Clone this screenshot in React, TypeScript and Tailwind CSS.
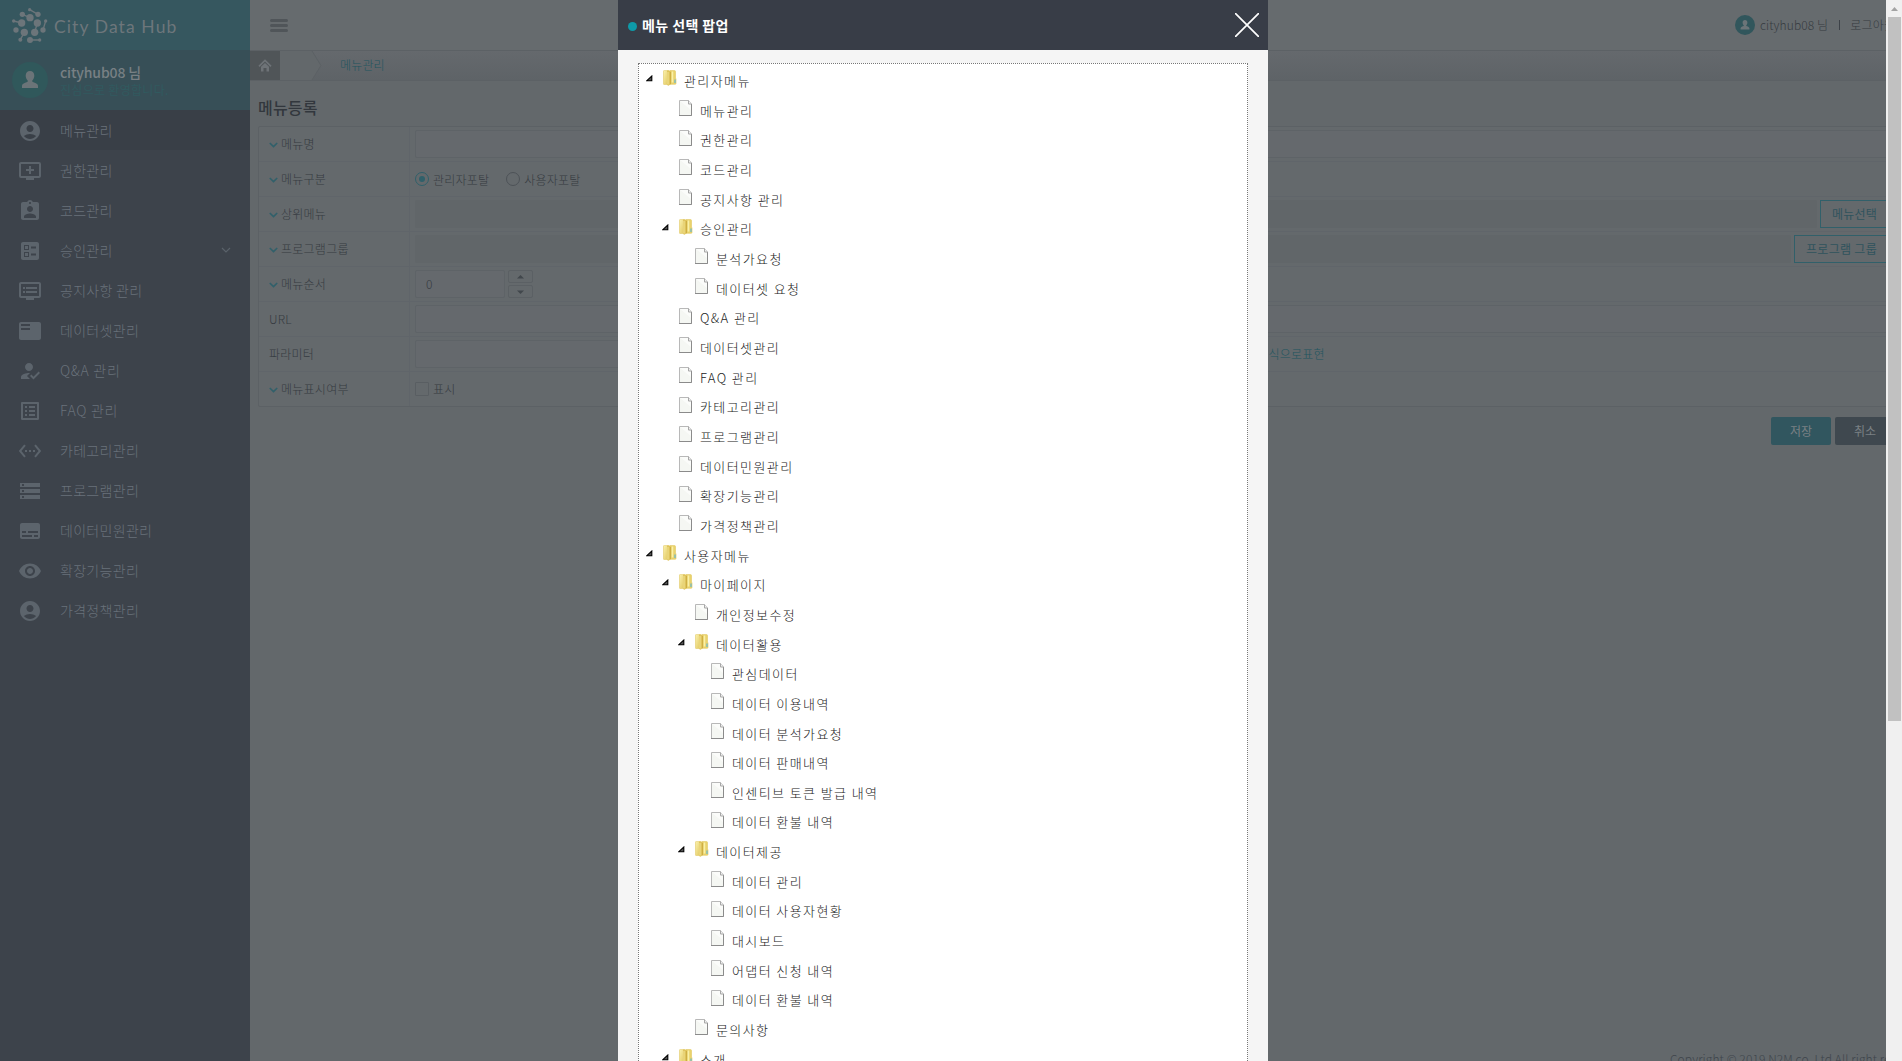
import React from "react";
import {
  MdAccountCircle, MdAddToQueue, MdAssignmentInd, MdBallot, MdDvr, MdFeaturedPlayList,
  MdHowToReg, MdListAlt, MdSettingsEthernet, MdStorage, MdSubtitles, MdVisibility,
} from "react-icons/md";

const menu = [
  { icon: MdAccountCircle, label: "메뉴관리", active: true },
  { icon: MdAddToQueue, label: "권한관리" },
  { icon: MdAssignmentInd, label: "코드관리" },
  { icon: MdBallot, label: "승인관리", sub: true },
  { icon: MdDvr, label: "공지사항 관리" },
  { icon: MdFeaturedPlayList, label: "데이터셋관리" },
  { icon: MdHowToReg, label: "Q&A 관리", wide: true },
  { icon: MdListAlt, label: "FAQ 관리", wide: true },
  { icon: MdSettingsEthernet, label: "카테고리관리" },
  { icon: MdStorage, label: "프로그램관리" },
  { icon: MdSubtitles, label: "데이터민원관리" },
  { icon: MdVisibility, label: "확장기능관리" },
  { icon: MdAccountCircle, label: "가격정책관리" },
];

const tree: [number, string, boolean?][] = [
  [0, "관리자메뉴", true],
  [1, "메뉴관리"], [1, "권한관리"], [1, "코드관리"], [1, "공지사항 관리"],
  [1, "승인관리", true], [2, "분석가요청"], [2, "데이터셋 요청"],
  [1, "Q&A 관리"], [1, "데이터셋관리"], [1, "FAQ 관리"], [1, "카테고리관리"],
  [1, "프로그램관리"], [1, "데이터민원관리"], [1, "확장기능관리"], [1, "가격정책관리"],
  [0, "사용자메뉴", true],
  [1, "마이페이지", true], [2, "개인정보수정"],
  [2, "데이터활용", true], [3, "관심데이터"], [3, "데이터 이용내역"], [3, "데이터 분석가요청"],
  [3, "데이터 판매내역"], [3, "인센티브 토큰 발급 내역"], [3, "데이터 환불 내역"],
  [2, "데이터제공", true], [3, "데이터 관리"], [3, "데이터 사용자현황"], [3, "대시보드"],
  [3, "어댑터 신청 내역"], [3, "데이터 환불 내역"],
  [2, "문의사항"],
  [1, "소개", true],
];

const indent = ["pl-[7px]", "pl-[23px]", "pl-[39px]", "pl-[55px]"];

function Logo() {
  const dots: [number, number, number][] = [
    [65, 14, 5], [43, 28, 8], [90, 28, 8], [66, 38, 11], [17, 48, 5],
    [41, 54, 11], [88, 54, 11], [113, 48, 5], [24, 75, 8], [49, 82, 11],
    [80, 82, 11], [105, 75, 8], [37, 104, 6], [66, 105, 9], [95, 105, 5],
  ];
  return (
    <svg width="44" height="40" viewBox="0 0 132 120" className="shrink-0" fill="#6c757a" stroke="#6c757a">
      <path fill="none" strokeWidth="4" d="M65 14L90 28M43 28L66 38M17 48L41 54M88 54L80 82M113 48L105 75M49 82L37 104M66 105H95" />
      {dots.map(([x, y, r], i) => <circle key={i} cx={x} cy={y} r={r} stroke="none" />)}
    </svg>
  );
}

function Person({ className, size }: { className: string; size: number }) {
  return (
    <svg width={size} height={size} viewBox="0 0 18 18" className={className} fill="currentColor">
      <path d="M9 0c2.700 0 4.300 1.900 4.300 4.600 0 2-.7 3.800-2 4.800v1.400c1.800.9 5.700 1.400 5.700 4.200V17H1v-2c0-2.800 3.900-3.300 5.700-4.200V9.400c-1.300-1-2-2.800-2-4.800C4.700 1.900 6.300 0 9 0z" />
    </svg>
  );
}

function FolderIcon() {
  return (
    <svg width="14" height="16" viewBox="0 0 14 16" className="shrink-0">
      <defs>
        <linearGradient id="fold" x1="0" y1="0" x2="1" y2="1">
          <stop offset="0" stopColor="#fbf2ae" />
          <stop offset="1" stopColor="#e0c65c" />
        </linearGradient>
      </defs>
      <path d="M7 .6h4.500q1 0 1 1v6.400l.5 1v4.500q0 .8-.8.800H7z" fill="#e9d26c" stroke="#e0c760" strokeWidth=".6" />
      <path d="M.5 1.200Q.5.400 1.200.4H5.500V14.500H1q-.5 0-.5-.6z" fill="url(#fold)" stroke="#e2ca68" strokeWidth=".6" />
      <path d="M4 .5h2.500l1.500 1.500V14l-2.500 1.800L4 15z" fill="#dfc45c" />
      <path d="M5 2v12.500" stroke="#f3e596" strokeWidth="1" />
      <path d="M7.500 2v12" stroke="#c9a83e" strokeWidth=".8" />
      <path d="M9.500 1.500v11" stroke="#faf0a8" strokeWidth="1.500" />
      <path d="M12 9.500v3.500" stroke="#58b4dc" strokeWidth="1.100" />
    </svg>
  );
}

function FileIcon() {
  return (
    <svg width="14" height="16" viewBox="0 0 14 16" className="shrink-0">
      <path d="M.5.500H9.500L12.500 4v11.500H.5z" fill="#f5f7f3" stroke="#b8b8b8" />
      <path d="M0 15.500h12.500V4" fill="none" stroke="#8b8b8b" />
      <path d="M1 1h8v3.500h3v5.500z" fill="#fff" opacity=".6" />
      <path d="M9.500.5v3.500h3" fill="#eee" stroke="#a8a8a8" />
    </svg>
  );
}

function Check() {
  return (
    <svg width="9" height="6" viewBox="0 0 9 6" className="mr-[3px] mt-[2px]" fill="none" stroke="#31606a" strokeWidth="1.700">
      <path d="M.8 1l3.700 3.500L8.200 1" />
    </svg>
  );
}

function Row({ label, req = true, last, children }: { label: string; req?: boolean; last?: boolean; children?: React.ReactNode }) {
  return (
    <div className={`flex ${last ? "h-[34px]" : "h-[35px] border-b border-[#60656a]"}`}>
      <div className="flex w-[151px] shrink-0 items-center border-r border-[#60656a] pl-[10px] text-[12px] tracking-[0.25px]">
        {req && <Check />}
        <span>{label}</span>
      </div>
      <div className="flex flex-1 items-center pl-[5px] pr-[5px] text-[12px] tracking-[0.2px]">{children}</div>
    </div>
  );
}

const Field = () => <div className="h-7 flex-1 rounded-[2px] border border-[#5e6367] bg-[#65696d]" />;
const Disabled = () => <div className="h-7 flex-1 rounded-[2px] bg-[#616669]" />;

function Spin({ d }: { d: string }) {
  return (
    <div className="flex h-[13px] w-[25px] items-center justify-center rounded-[2px] border border-[#5b6064]">
      <svg width="7" height="4" viewBox="0 0 7 4" fill="#41474c"><path d={d} /></svg>
    </div>
  );
}

function Sidebar() {
  return (
    <aside className="h-full w-[250px] shrink-0 bg-[#3d434b]">
      <div className="flex h-[50px] items-center bg-[#36575f] pl-2">
        <Logo />
        <span className="ml-[2px] mt-[5px] whitespace-nowrap font-['Lato'] text-[17.5px] font-normal tracking-[1.1px] text-[#6d767b]">City Data Hub</span>
      </div>
      <div className="flex h-[60px] items-center bg-[#374f57] pl-3">
        <div className="flex size-9 items-center justify-center rounded-full bg-[#30585b]">
          <Person size={18} className="mb-px text-[#6b7478]" />
        </div>
        <div className="ml-3 flex flex-col pt-[1px]">
          <span className="text-[14px] font-medium leading-[18px] tracking-[-0.15px] text-[#788084]">cityhub08 님</span>
          <span className="text-[12px] font-normal leading-[18px] tracking-[0.3px] text-[#315a5f]">진심으로 환영합니다.</span>
        </div>
      </div>
      {menu.map(({ icon: Icon, label, active, sub, wide }) => (
        <div key={label} className={`flex h-10 items-center pl-[18px] pr-[18px] text-[14px] text-[#5c646c] ${wide ? "tracking-[0.7px]" : "tracking-[0.3px]"} ${active ? "bg-[#393f47]" : ""}`}>
          <Icon size={24} className="mt-[2px]" />
          <span className="ml-[18px] flex-1 text-[#69717a]">{label}</span>
          {sub && (
            <svg width="12" height="8" viewBox="0 0 12 8" fill="none" stroke="#5a626a" strokeWidth="1.200"><path d="M2 2l4 4 4-4" /></svg>
          )}
        </div>
      ))}
    </aside>
  );
}

function Main() {
  return (
    <main className="flex h-full w-[1652px] shrink-0 flex-col bg-[#63686b] text-[#363b41]">
      <header className="flex h-[50px] shrink-0 items-center bg-[#666b6e] pl-5">
        <div className="flex w-[18px] flex-col gap-[2px]">
          <i className="h-[3px] rounded-sm bg-[#505559]" />
          <i className="h-[3px] rounded-sm bg-[#505559]" />
          <i className="h-[3px] rounded-sm bg-[#505559]" />
        </div>
        <div className="ml-[1447px] flex items-center whitespace-nowrap text-[12px]">
          <span className="flex size-5 items-center justify-center rounded-full bg-[#31565c]"><Person size={10} className="text-[#6b7478]" /></span>
          <span className="ml-[5px] tracking-[0.1px]">cityhub08 님</span>
          <i className="ml-[11px] h-[10px] w-px bg-[#3d4248]" />
          <span className="ml-[10px] tracking-[0.25px]">로그아웃</span>
        </div>
      </header>
      <nav className="flex h-[31px] shrink-0 border-y border-[#5c6165] bg-linear-to-b from-[#65696d] to-[#5e6367]">
        <span className="flex w-[30px] items-center justify-center bg-[#505558]">
          <svg width="14" height="13" viewBox="0 0 14 13" fill="none" stroke="#6e7377">
            <path d="M1 7.300L7 1.500l6 5.800" strokeWidth="1.700" />
            <path d="M3 7.800L7 4l4 3.800V12.500H8.500V9h-3v3.500H3z" fill="#6e7377" stroke="none" />
          </svg>
        </span>
        <svg width="42" height="29" viewBox="0 0 42 29" fill="none"><path d="M0 0H32l9 14.500L32 29H0z" fill="#63686b" /><path d="M32 0l9 14.500L32 29" stroke="#5c6165" /></svg>
        <span className="-mt-[2px] ml-[18px] self-center text-[12px] tracking-[0.15px] text-[#22555f]">메뉴관리</span>
      </nav>
      <h1 className="ml-2 mt-[15px] text-[16px] font-medium leading-[22px] tracking-[0.2px] text-[#32373d]">메뉴등록</h1>
      <section className="ml-2 mt-2 w-[1637px] rounded-[2px] border border-[#5c6165] bg-[#64696c]">
        <Row label="메뉴명"><Field /></Row>
        <Row label="메뉴구분">
          <span className="flex size-[14px] items-center justify-center rounded-full border border-[#30606a]"><i className="size-[6px] rounded-full bg-[#30606a]" /></span>
          <span className="ml-1 mt-px">관리자포탈</span>
          <span className="ml-[17px] size-[14px] rounded-full border border-[#4d5257]" />
          <span className="ml-1 mt-px">사용자포탈</span>
        </Row>
        <Row label="상위메뉴">
          <Disabled />
          <span className="ml-[3px] flex h-7 items-center border border-[#31606a] px-[11px] font-normal text-[#30535d]">메뉴선택</span>
        </Row>
        <Row label="프로그램그룹">
          <Disabled />
          <span className="ml-[3px] flex h-7 items-center border border-[#31606a] px-[11px] font-normal tracking-[0.3px] text-[#30535d]">프로그램 그룹</span>
        </Row>
        <Row label="메뉴순서">
          <span className="flex h-7 w-[90px] items-center rounded-[2px] border border-[#5e6367] bg-[#65696d] pl-[10px]">0</span>
          <span className="ml-[3px] flex flex-col gap-[2px]">
            <Spin d="M0 3.500L3.500 0 7 3.500z" />
            <Spin d="M0 .5L3.500 4 7 .5z" />
          </span>
        </Row>
        <Row label="URL" req={false}><Field /></Row>
        <Row label="파라미터" req={false}>
          <div className="h-7 w-[700px] rounded-[2px] border border-[#5e6367] bg-[#65696d]" />
          <span className="ml-[100px] text-[#22555f]">* JSON 형식으로표현</span>
        </Row>
        <Row label="메뉴표시여부" last>
          <span className="size-[14px] rounded-[1px] border border-[#595e62]" />
          <span className="ml-1">표시</span>
        </Row>
      </section>
      <div className="mt-[10px] flex w-[1645px] justify-end gap-1 text-[12px] font-normal text-[#7a8084]">
        <span className="flex h-7 w-[60px] items-center justify-center rounded-[2px] bg-[#31565f] pb-px">저장</span>
        <span className="flex h-7 w-[60px] items-center justify-center rounded-[2px] bg-[#3f484f] pb-px">취소</span>
      </div>
      <footer className="ml-[1420px] mt-[605px] whitespace-nowrap text-[12px] leading-[18px] tracking-[0.1px] text-[#3f454c]">Copyright © 2019 N2M co. Ltd All right reserved.</footer>
    </main>
  );
}

function Popup() {
  return (
    <div className="absolute left-[618px] top-0 flex h-full w-[650px] flex-col bg-[#f5f5f5]">
      <div className="flex h-[50px] shrink-0 items-center bg-[#383d47] pl-[10px] pr-[9px]">
        <i className="mt-[3px] size-[9px] rounded-full bg-[#0e9aa8]" />
        <span className="ml-[5px] flex-1 text-[14px] font-bold tracking-[0.4px] text-white">메뉴 선택 팝업</span>
        <svg width="24" height="24" viewBox="0 0 24 24" stroke="#fff" strokeWidth="1.700"><path d="M0 0l24 24M24 0L0 24" /></svg>
      </div>
      <div className="ml-5 mt-[13px] w-[610px] flex-1 overflow-hidden border border-b-0 border-dotted border-[#777] bg-white text-[13px] text-[#222]">
        {tree.map(([level, label, folder], i) => (
          <div key={i} className={`flex h-[29.67px] items-center ${indent[level]}`}>
            <svg width="7" height="7" viewBox="0 0 7 7" className="mr-[10px] shrink-0">
              {folder && <path d="M.8 5.700h5V1z" fill="#555" stroke="#000" strokeWidth="1.100" />}
            </svg>
            <span className="-mt-px flex">{folder ? <FolderIcon /> : <FileIcon />}</span>
            <span className="ml-[7px] whitespace-nowrap pt-[4px] tracking-[1.4px]">{label}</span>
          </div>
        ))}
      </div>
    </div>
  );
}

export default function App() {
  return (
    <div className="relative flex h-[1061px] w-[1902px] overflow-hidden font-['Noto_Sans_CJK_KR',sans-serif] font-light">
      <div className="flex w-[1886px] shrink-0 overflow-hidden">
        <Sidebar />
        <Main />
      </div>
      <div className="flex w-4 shrink-0 flex-col items-center bg-[#f0f0f0]">
        <div className="flex h-[17px] items-center">
          <svg width="7" height="4" viewBox="0 0 7 4" fill="#a3a3a3"><path d="M0 4L3.500 0 7 4z" /></svg>
        </div>
        <div className="h-[704px] w-[13px] bg-[#c1c1c1]" />
      </div>
      <Popup />
    </div>
  );
}
